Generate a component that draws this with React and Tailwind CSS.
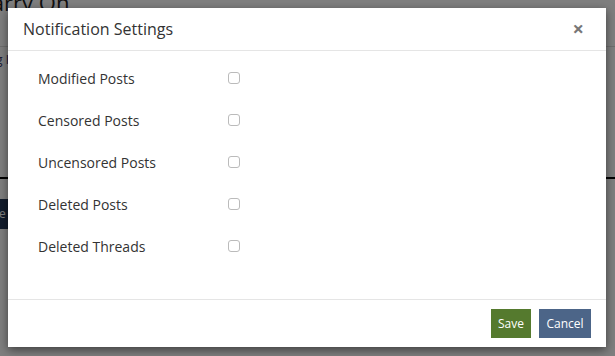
import React from "react";

const rows = ["Modified Posts", "Censored Posts", "Uncensored Posts", "Deleted Posts", "Deleted Threads"];

export default function App() {
  return (
    <div className="relative w-[615px] h-[356px] overflow-hidden bg-white" style={{ fontFamily: '"Open Sans", sans-serif' }}>
      {/* background page */}
      <div className="flex flex-col">
        <div className="h-[16px] -ml-[22px] text-[22px] leading-[16px] text-[#222] -mt-[6px] whitespace-nowrap">Carry On</div>
        <div className="mt-[36px] h-[1px] bg-[#ddd]"></div>
        <div className="mt-[4px] -ml-[4px] text-[12px] text-[#336]">g I</div>
        <div className="mt-[108px] h-[2px] bg-black"></div>
        <div className="mt-[20px] w-[8px] h-[30px] bg-[#243858] text-white text-[12px] overflow-hidden flex items-center">
          <span className="-ml-[1px]">e</span>
        </div>
      </div>
      {/* overlay */}
      <div className="absolute inset-0 bg-black/50"></div>
      {/* modal */}
      <div className="absolute left-[8px] top-[8px] w-[598px] h-[339px] bg-white flex flex-col shadow-[0_3px_9px_rgba(0,0,0,0.5)]">
        <div className="h-[43px] flex items-center justify-between pl-[15px] pr-[22px] border-b border-[#e5e5e5]">
          <span className="text-[16px] text-[#333]">Notification Settings</span>
          <span className="text-[20px] font-bold text-[#777] leading-none">×</span>
        </div>
        <div className="flex-1 flex flex-col pt-[6px] pl-[30px]">
          {rows.map((r) => (
            <div key={r} className="h-[42px] flex items-center">
              <span className="w-[190px] text-[14px] text-[#333]">{r}</span>
              <span className="w-[12px] h-[12px] border border-[#bbb] rounded-[3px] bg-white"></span>
            </div>
          ))}
        </div>
        <div className="h-[48px] border-t border-[#e5e5e5] flex items-center justify-end gap-[8px] pr-[15px]">
          <button className="h-[29px] w-[40px] bg-[#557a2e] text-white text-[12px]">Save</button>
          <button className="h-[29px] w-[52px] bg-[#4c6588] text-white text-[12px]">Cancel</button>
        </div>
      </div>
    </div>
  );
}
